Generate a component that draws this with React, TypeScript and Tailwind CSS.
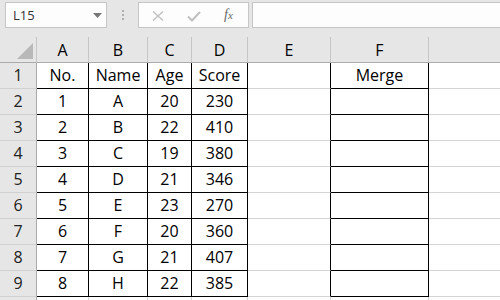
import React from "react";

const cols = ["A", "B", "C", "D", "E", "F", ""];
const data: string[][] = [
  ["No.", "Name", "Age", "Score"],
  ["1", "A", "20", "230"],
  ["2", "B", "22", "410"],
  ["3", "C", "19", "380"],
  ["4", "D", "21", "346"],
  ["5", "E", "23", "270"],
  ["6", "F", "20", "360"],
  ["7", "G", "21", "407"],
  ["8", "H", "22", "385"],
];

const font = { fontFamily: '"Open Sans", "Noto Sans", sans-serif' };

export default function App() {
  return (
    <div className="w-[500px] h-[300px] overflow-hidden bg-white text-black" style={font}>
      {/* Formula bar */}
      <div className="h-[37px] bg-[#e6e6e6] flex items-start pt-[2px]">
        <div className="ml-[5px] w-[102px] h-[26px] box-border border border-[#c6c6c6] bg-[#fdfdfd] flex items-center relative">
          <span className="pl-[7px] text-[13px] leading-none text-[#333] pt-[1px]">L15</span>
          <svg className="absolute left-[87px] top-[10px]" width="9" height="5" viewBox="0 0 9 5">
            <path d="M0 0 L9 0 L4.5 5 Z" fill="#777" />
          </svg>
        </div>
        <div className="w-[31px] h-[26px] flex flex-col items-center justify-center gap-[2px]">
          <div className="w-[2px] h-[2px] bg-[#b0b0b0]" />
          <div className="w-[2px] h-[2px] bg-[#b0b0b0]" />
          <div className="w-[2px] h-[2px] bg-[#b0b0b0]" />
        </div>
        <div className="w-[111px] h-[26px] box-border border border-[#c6c6c6] bg-[#fdfdfd] relative">
          <svg className="absolute left-[13px] top-[8px]" width="12" height="10" viewBox="0 0 12 10">
            <path d="M1 0.5 L11 9.5 M11 0.5 L1 9.5" stroke="#c0c0c0" strokeWidth="1.4" />
          </svg>
          <svg className="absolute left-[48px] top-[8px]" width="14" height="11" viewBox="0 0 14 11">
            <path d="M1 5.5 L5 9.5 L13 1" stroke="#c0c0c0" strokeWidth="2" fill="none" />
          </svg>
          <span
            className="absolute left-[85px] top-[5px] text-[14px] italic text-[#666] leading-none"
            style={{ fontFamily: '"Liberation Serif", "DejaVu Serif", serif' }}
          >
            f<span className="text-[11px]">x</span>
          </span>
        </div>
        <div className="ml-[3px] flex-1 h-[26px] box-border border border-r-0 border-[#c6c6c6] bg-[#fdfdfd]" />
      </div>

      {/* Grid */}
      <div className="grid grid-cols-[37px_52px_59px_44px_56px_83px_98px_1fr] auto-rows-[26px]">
        {/* Header row */}
        <div className="box-border bg-[#e6e6e6] border-r border-b border-r-[#c6c6c6] border-b-[#ababab] relative">
          <svg className="absolute left-[17px] top-[6px]" width="16" height="16" viewBox="0 0 16 16">
            <path d="M16 0 L16 16 L0 16 Z" fill="#b8b8b8" />
          </svg>
        </div>
        {cols.map((c, i) => (
          <div
            key={"h" + i}
            className={
              "box-border bg-[#e6e6e6] border-b border-b-[#ababab] flex items-center justify-center text-[16px] leading-[25px] pt-[1px] " +
              (i < 6 ? "border-r border-r-[#c6c6c6]" : "")
            }
          >
            {c}
          </div>
        ))}

        {/* Data rows */}
        {data.map((row, r) => (
          <React.Fragment key={"r" + r}>
            <div className="box-border bg-[#e6e6e6] border-r border-b border-r-[#ababab] border-b-[#d0d0d0] flex items-center justify-center text-[16px] leading-[25px] text-[#222]">
              {r + 1}
            </div>
            {row.map((v, c) => (
              <div
                key={"c" + c}
                className="box-border border-r border-b border-black flex items-center justify-center text-[16px] leading-[25px]"
              >
                {v}
              </div>
            ))}
            <div className="box-border border-r border-b border-r-black border-b-[#d4d4d4]" />
            <div className="box-border border-r border-b border-black flex items-center justify-center text-[16px] leading-[25px]">
              {r === 0 ? "Merge" : ""}
            </div>
            <div className="box-border border-b border-b-[#d4d4d4]" />
          </React.Fragment>
        ))}

        {/* Row 10 partial */}
        <div className="box-border bg-[#e6e6e6] border-r border-b border-r-[#ababab] border-b-[#d0d0d0]" />
        {[0, 1, 2, 3, 4, 5].map((i) => (
          <div key={"x" + i} className="box-border border-r border-b border-[#d4d4d4]" />
        ))}
        <div className="box-border border-b border-b-[#d4d4d4]" />
      </div>
    </div>
  );
}
